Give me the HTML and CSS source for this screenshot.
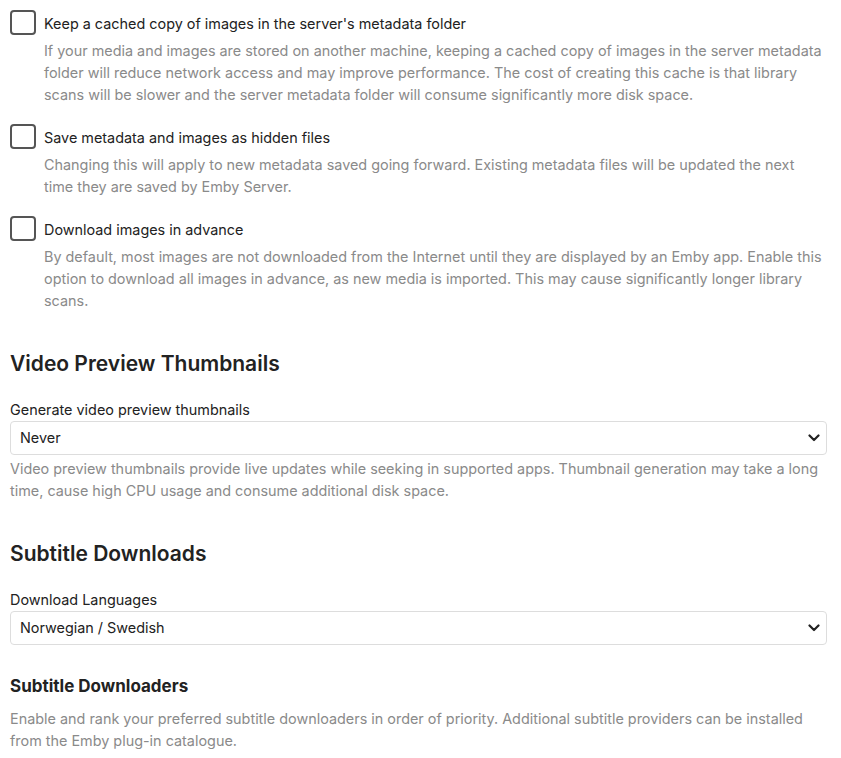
FILE: index.html
```html
<!DOCTYPE html>
<html lang="en">
<head>
    <meta charset="UTF-8">
    <meta name="viewport" content="width=device-width, initial-scale=1.0">
    <title>Library Settings</title>
    <link rel="stylesheet" href="styles.css">
</head>
<body>
    <div class="page">
        <!-- Opciones de imagenes -->
        <div class="check-item">
            <label class="check-row">
                <span class="box"></span>
                <span class="check-label">Keep a cached copy of images in the server's metadata folder</span>
            </label>
            <div class="field-desc">If your media and images are stored on another machine, keeping a cached copy of images in the server metadata folder will reduce network access and may improve performance. The cost of creating this cache is that library scans will be slower and the server metadata folder will consume significantly more disk space.</div>
        </div>

        <div class="check-item">
            <label class="check-row">
                <span class="box"></span>
                <span class="check-label">Save metadata and images as hidden files</span>
            </label>
            <div class="field-desc">Changing this will apply to new metadata saved going forward. Existing metadata files will be updated the next time they are saved by Emby Server.</div>
        </div>

        <div class="check-item">
            <label class="check-row">
                <span class="box"></span>
                <span class="check-label">Download images in advance</span>
            </label>
            <div class="field-desc">By default, most images are not downloaded from the Internet until they are displayed by an Emby app. Enable this option to download all images in advance, as new media is imported. This may cause significantly longer library scans.</div>
        </div>

        <h2 class="section-title">Video Preview Thumbnails</h2>
        <div class="select-field">
            <div class="select-label">Generate video preview thumbnails</div>
            <div class="select-box">
                <span>Never</span>
                <svg class="chevron" width="12" height="8" viewBox="0 0 12 8"><path d="M1.5 1.5 L6 6 L10.5 1.5" fill="none" stroke="#222" stroke-width="2.2" stroke-linecap="round" stroke-linejoin="round"/></svg>
            </div>
            <div class="select-desc">Video preview thumbnails provide live updates while seeking in supported apps. Thumbnail generation may take a long time, cause high CPU usage and consume additional disk space.</div>
        </div>

        <h2 class="section-title">Subtitle Downloads</h2>
        <div class="select-field">
            <div class="select-label">Download Languages</div>
            <div class="select-box">
                <span>Norwegian / Swedish</span>
                <svg class="chevron" width="12" height="8" viewBox="0 0 12 8"><path d="M1.5 1.5 L6 6 L10.5 1.5" fill="none" stroke="#222" stroke-width="2.2" stroke-linecap="round" stroke-linejoin="round"/></svg>
            </div>
        </div>

        <h3 class="sub-title">Subtitle Downloaders</h3>
        <div class="select-desc">Enable and rank your preferred subtitle downloaders in order of priority. Additional subtitle providers can be installed from the Emby plug-in catalogue.</div>
    </div>
</body>
</html>
```

FILE: styles.css
```css
/* Estilos globales */
body {
    font-family: 'Inter', 'Liberation Sans', sans-serif;
    background-color: #fff;
    color: #222;
    margin: 0;
    padding: 0;
}

.page {
    padding: 12px 14px 0 10px;
    font-size: 14.4px;
    line-height: 22px;
}

/* Casillas */
.check-item {
    margin-bottom: 20px;
}

.check-row {
    display: flex;
    align-items: center;
    gap: 8px;
}

.box {
    width: 22px;
    height: 21px;
    border: 2px solid #555;
    border-radius: 4px;
    margin-top: -2px;
    flex-shrink: 0;
}

.check-label {
    color: #222;
}

.field-desc {
    color: #8a8a8a;
    margin-top: 5px;
    padding-left: 34px;
}

/* Titulos */
.section-title {
    font-size: 21px;
    font-weight: 600;
    line-height: 28px;
    margin: 38px 0 21px;
    color: #222;
}

.sub-title {
    font-size: 17px;
    font-weight: 700;
    line-height: 24px;
    margin: 29px 0 10px;
    color: #222;
}

/* Selectores */
.select-label {
    color: #222;
}

.select-box {
    display: flex;
    justify-content: space-between;
    align-items: center;
    height: 32px;
    border: 1px solid #ddd;
    border-radius: 4px;
    padding: 0 6px 0 9px;
    color: #222;
}

.chevron {
    display: block;
}

.select-desc {
    color: #8a8a8a;
    margin-top: 3px;
}
```
